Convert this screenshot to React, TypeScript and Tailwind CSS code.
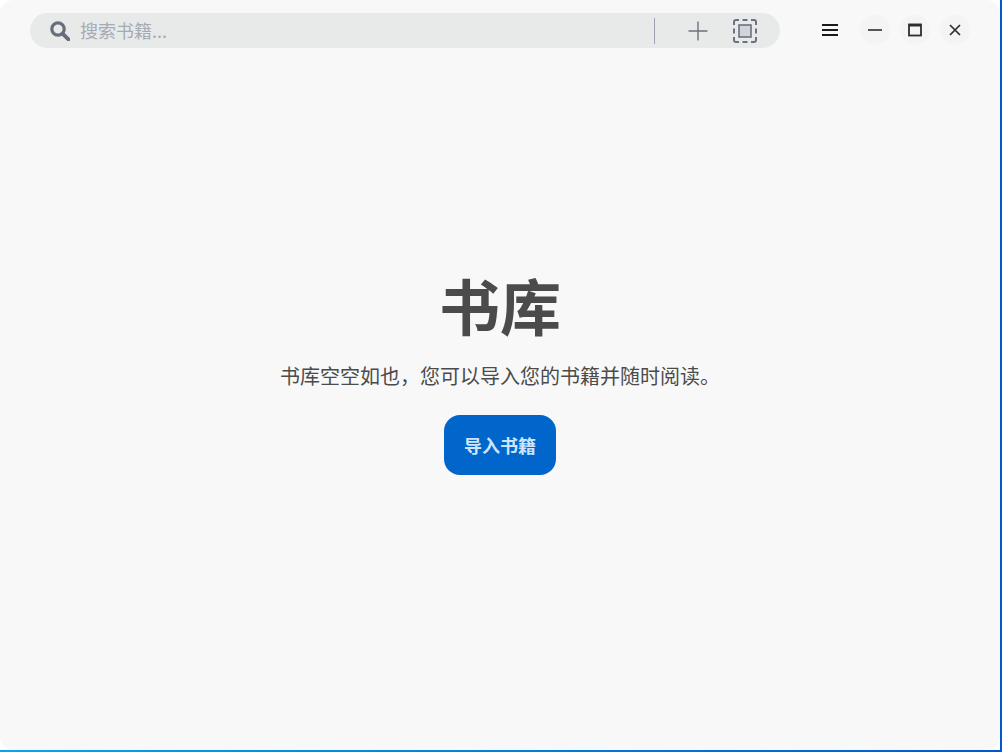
const fontStack = "font-['Microsoft_YaHei','Noto_Sans_CJK_SC','Noto_Sans',sans-serif]"

const SearchIcon = () => (
    <svg width="20" height="20" viewBox="0 0 20 20" fill="none" stroke="#666d7b">
        <circle cx="8" cy="8" r="6.2" strokeWidth="3.2" />
        <path d="M12.6 12.6 L18.4 18.4" strokeWidth="3.8" strokeLinecap="round" />
    </svg>
)

const ScanIcon = () => (
    <svg width="24" height="24" viewBox="0 0 24 24" fill="none">
        <path d="M1 6V3a2 2 0 0 1 2-2h3M9.5 1h5M18 1h3a2 2 0 0 1 2 2v3M23 9.5v5M23 18v3a2 2 0 0 1-2 2h-3M14.5 23h-5M6 23H3a2 2 0 0 1-2-2v-3M1 14.5v-5" stroke="#6b7280" strokeWidth="2" />
        <rect x="6" y="6" width="12" height="12" fill="#d1d5db" stroke="#6b7280" strokeWidth="1.6" />
    </svg>
)

const PlusIcon = () => (
    <svg width="20" height="20" viewBox="0 0 20 20" stroke="#6b7280" strokeWidth="1.4">
        <path d="M0.5 10H19.5M10 0.5V19.5" />
    </svg>
)

const MenuIcon = () => (
    <svg width="16" height="12" viewBox="0 0 16 12" stroke="#1a1a1a" strokeWidth="1.8">
        <path d="M0 1H16M0 6H16M0 11H16" />
    </svg>
)

const MinIcon = () => (
    <svg width="14" height="2" viewBox="0 0 14 2" stroke="#2e2e2e" strokeWidth="1.6">
        <path d="M0 1H14" />
    </svg>
)

const MaxIcon = () => (
    <svg width="14" height="14" viewBox="0 0 14 14" fill="none" stroke="#2e2e2e">
        <rect x="1" y="1.5" width="12" height="11" strokeWidth="1.8" />
        <path d="M1 2.2H13" strokeWidth="2.6" />
    </svg>
)

const CloseIcon = () => (
    <svg width="12" height="12" viewBox="0 0 12 12" stroke="#2e2e2e" strokeWidth="1.7">
        <path d="M1 1L11 11M11 1L1 11" />
    </svg>
)

const WinButton = ({ children }: { children: React.ReactNode }) => (
    <button className="flex h-[30px] w-[30px] items-center justify-center rounded-full bg-[#f4f4f4]">
        {children}
    </button>
)

const App = () => {
    return (
        <div className={`h-[752px] w-[1002px] overflow-hidden bg-gradient-to-r from-[#08a4ec] via-[#0080dc] to-[#0058cc] ${fontStack}`}>
            <div className="h-[750px] w-[1000px] bg-white">
                <div className="flex h-full flex-col rounded-[14px] bg-[#f8f8f8]">
                    {/* top bar */}
                    <header className="flex items-start pl-[30px] pt-[13px]">
                        <div className="flex h-[35px] w-[750px] items-center rounded-full bg-[#e8eaea] pl-5">
                            <SearchIcon />
                            <input
                                placeholder="搜索书籍..."
                                className="ml-[10px] w-[300px] bg-transparent text-[18px] text-gray-700 outline-none placeholder:text-[#a5aab3]"
                            />
                            <div className="ml-[274px] h-[26px] w-px bg-[#9ca3af]" />
                            <div className="ml-[33px]"><PlusIcon /></div>
                            <div className="ml-[25px]"><ScanIcon /></div>
                        </div>
                        <div className="ml-[42px] mt-[2px] flex items-center">
                            <div className="flex h-[30px] items-center"><MenuIcon /></div>
                            <div className="ml-[22px] flex gap-[10px]">
                                <WinButton><MinIcon /></WinButton>
                                <WinButton><MaxIcon /></WinButton>
                                <WinButton><CloseIcon /></WinButton>
                            </div>
                        </div>
                    </header>

                    {/* empty library */}
                    <main className="flex flex-1 flex-col items-center pt-[217px]">
                        <h1 className="text-[61px] leading-[80px] font-bold text-[#4b4b4b]">书库</h1>
                        <p className="mt-[16px] text-[20px] leading-[30px] text-[#4b4b4b]">书库空空如也，您可以导入您的书籍并随时阅读。</p>
                        <button className="mt-[24px] h-[60px] w-[112px] rounded-[16px] bg-[#0066cc] text-[18px] font-bold text-[#cfe4fb]">导入书籍</button>
                    </main>
                </div>
            </div>
        </div>
    )
}

export default App
